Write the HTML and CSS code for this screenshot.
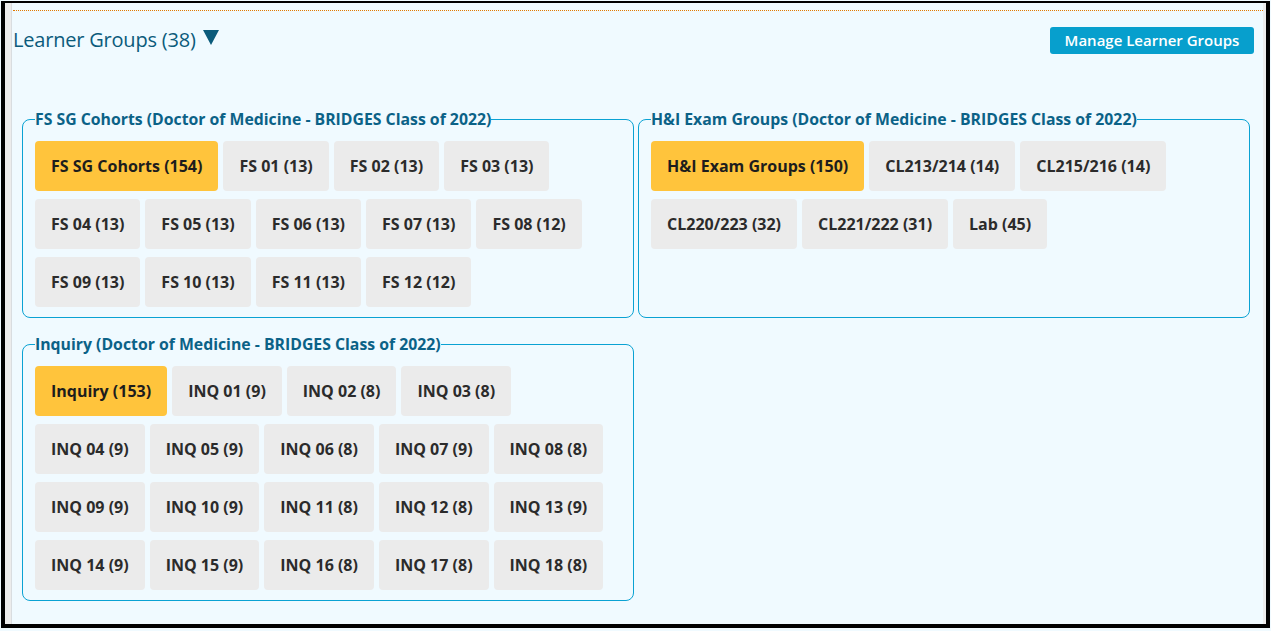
FILE: index.html
```html
<!DOCTYPE html>
<html>
<head>
<meta charset="utf-8">
<link rel="stylesheet" href="styles.css">
</head>
<body>
<div class="frame">
  <div class="panel">
    <div class="dotted"></div>
    <div class="header">
      <h2 class="title">Learner Groups (38) <svg class="caret" width="16" height="15" viewBox="0 0 16 15"><path d="M0 0H16L8 15Z" fill="#0b5b7b"/></svg></h2>
      <button class="manage">Manage Learner Groups</button>
    </div>
    <div class="groups">
      <fieldset class="set">
        <legend>FS SG Cohorts (Doctor of Medicine - BRIDGES Class of 2022)</legend>
        <div class="row">
          <span class="chip parent">FS SG Cohorts (154)</span>
          <span class="chip">FS 01 (13)</span>
          <span class="chip">FS 02 (13)</span>
          <span class="chip">FS 03 (13)</span>
        </div>
        <div class="row">
          <span class="chip">FS 04 (13)</span>
          <span class="chip">FS 05 (13)</span>
          <span class="chip">FS 06 (13)</span>
          <span class="chip">FS 07 (13)</span>
          <span class="chip">FS 08 (12)</span>
        </div>
        <div class="row">
          <span class="chip">FS 09 (13)</span>
          <span class="chip">FS 10 (13)</span>
          <span class="chip">FS 11 (13)</span>
          <span class="chip">FS 12 (12)</span>
        </div>
      </fieldset>
      <fieldset class="set">
        <legend>H&amp;I Exam Groups (Doctor of Medicine - BRIDGES Class of 2022)</legend>
        <div class="row">
          <span class="chip parent">H&amp;I Exam Groups (150)</span>
          <span class="chip">CL213/214 (14)</span>
          <span class="chip">CL215/216 (14)</span>
        </div>
        <div class="row">
          <span class="chip">CL220/223 (32)</span>
          <span class="chip">CL221/222 (31)</span>
          <span class="chip">Lab (45)</span>
        </div>
      </fieldset>
      <fieldset class="set">
        <legend>Inquiry (Doctor of Medicine - BRIDGES Class of 2022)</legend>
        <div class="row">
          <span class="chip parent">Inquiry (153)</span>
          <span class="chip">INQ 01 (9)</span>
          <span class="chip">INQ 02 (8)</span>
          <span class="chip">INQ 03 (8)</span>
        </div>
        <div class="row">
          <span class="chip">INQ 04 (9)</span>
          <span class="chip">INQ 05 (9)</span>
          <span class="chip">INQ 06 (8)</span>
          <span class="chip">INQ 07 (9)</span>
          <span class="chip">INQ 08 (8)</span>
        </div>
        <div class="row">
          <span class="chip">INQ 09 (9)</span>
          <span class="chip">INQ 10 (9)</span>
          <span class="chip">INQ 11 (8)</span>
          <span class="chip">INQ 12 (8)</span>
          <span class="chip">INQ 13 (9)</span>
        </div>
        <div class="row">
          <span class="chip">INQ 14 (9)</span>
          <span class="chip">INQ 15 (9)</span>
          <span class="chip">INQ 16 (8)</span>
          <span class="chip">INQ 17 (8)</span>
          <span class="chip">INQ 18 (8)</span>
        </div>
      </fieldset>
    </div>
  </div>
</div>
</body>
</html>
```

FILE: styles.css
```css
* { box-sizing: border-box; }
html, body { margin: 0; padding: 0; }
body {
  background: #f0faff;
  font-family: "Open Sans", "Lato", sans-serif;
  width: 1271px;
  height: 631px;
  overflow: hidden;
}
.frame {
  width: 1269px;
  height: 627px;
  margin: 1px 0 0 1px;
  border: 4px solid #000;
  border-top-width: 2px;
  background: #ececec;
  padding: 0 3px 0 6px;
  display: flex;
}
.panel {
  flex: 1;
  background: #f0faff;
  border-left: 1px solid #d9dde0;
  padding-top: 7px;
}
.dotted {
  height: 0;
  border-top: 1px dotted #e27a00;
  margin: 0 0 0 1px;
}
.header {
  display: flex;
  justify-content: space-between;
  align-items: center;
  padding: 15px 9px 0 1px;
}
.title {
  margin: 0;
  font-size: 20px;
  font-weight: 400;
  color: #0b5b7b;
  line-height: 28px;
  display: flex;
  align-items: center;
  gap: 7px;
  letter-spacing: -0.2px;
}
.caret { display: block; margin-top: -6px; }
.manage {
  font-family: inherit;
  font-size: 15px;
  font-weight: 600;
  color: #fff;
  background: #079fcd;
  border: none;
  border-radius: 3px;
  height: 27px;
  width: 204px;
  padding: 0;
}
.groups {
  display: grid;
  grid-template-columns: 612px 612px;
  column-gap: 4px;
  row-gap: 17px;
  margin: 56px 11px 0 10px;
  align-items: start;
}
.set {
  margin: 0;
  border: 1px solid #0aa2d3;
  border-radius: 8px;
  padding: 13px 12px 10px 12px;
  min-width: 0;
  display: flex;
  flex-direction: column;
  gap: 8px;
  align-self: stretch;
}
.set legend {
  padding: 0;
  font-size: 15.8px;
  line-height: 18px;
  font-weight: 700;
  color: #0b6287;
}
.row {
  display: flex;
  gap: 5px;
}
.chip {
  display: flex;
  align-items: center;
  height: 50px;
  padding: 0 16px;
  background: #ebebeb;
  border-radius: 4px;
  font-size: 16px;
  font-weight: 700;
  color: #2b2b2b;
  white-space: nowrap;
}
.chip.parent { background: #ffc43c; color: #1d1d1d; }
```
